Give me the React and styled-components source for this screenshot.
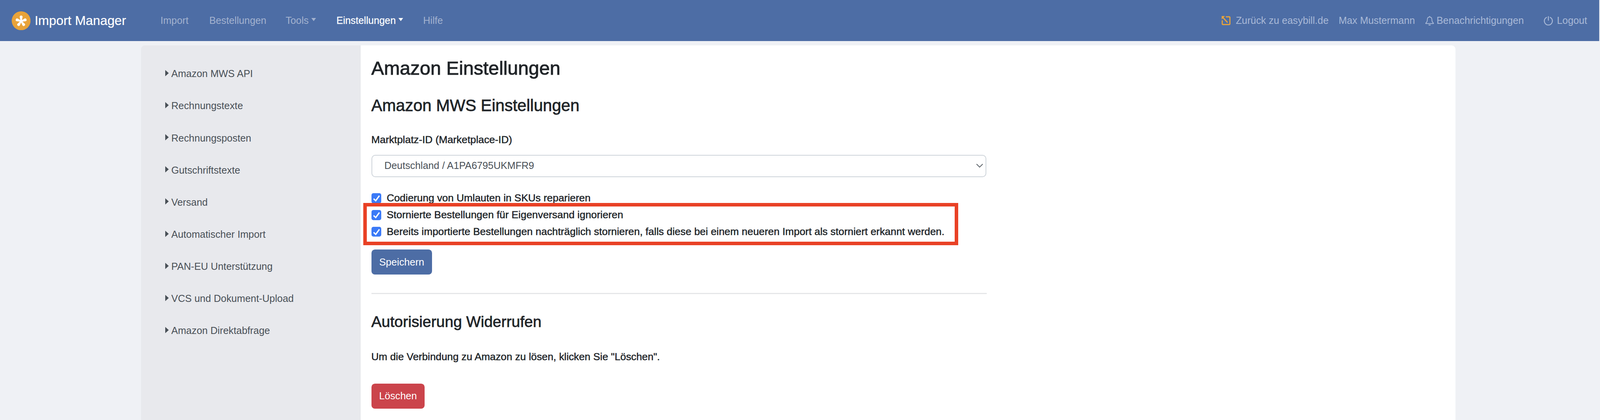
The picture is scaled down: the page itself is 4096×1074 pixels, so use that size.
import React from "react";
import styled, { createGlobalStyle } from "styled-components";

const Global = createGlobalStyle`
  html, body { margin: 0; padding: 0; background: #eff1f5; overflow: hidden; }
  body { font-family: "Liberation Sans", Arial, sans-serif; color: #212529; }
  #root { zoom: 0.985; width: 4156px; height: 1090px; overflow: hidden; }
  * { box-sizing: border-box; }
`;

const Page = styled.div`
  width: 4156px;
  height: 1090px;
  display: flex;
  flex-direction: column;
`;

const Navbar = styled.nav`
  height: 107px;
  background: #4d6da5;
  display: flex;
  align-items: center;
  padding: 0 31px 0 30px;
  flex: none;
`;

const Brand = styled.div`
  display: flex;
  align-items: center;
  gap: 11px;
  width: 387px;
  color: #fff;
  font-size: 33.7px;
  -webkit-text-stroke: 0.25px #fff;
`;

const NavItem = styled.span`
  display: inline-flex;
  align-items: center;
  font-size: 25.7px;
  line-height: 40px;
  white-space: nowrap;
  margin-left: ${(p) => p.$ml || 0}px;
  color: ${(p) => (p.$active ? "#ffffff" : p.$right ? "#a9b9d7" : "#a3b2cf")};
  ${(p) => p.$active && "-webkit-text-stroke: 0.3px #fff;"}
`;

const Caret = styled.i`
  display: inline-block;
  margin-left: 7px;
  margin-top: -5px;
  border-top: 9px solid currentColor;
  border-left: 6.5px solid transparent;
  border-right: 6.5px solid transparent;
`;

const RightNav = styled.div`
  margin-left: auto;
  display: flex;
  align-items: center;
`;

const IconSlot = styled.span`
  display: inline-flex;
  margin: 0 ${(p) => p.$mr}px 0 ${(p) => p.$ml || 0}px;
`;

const Container = styled.div`
  flex: 1;
  width: 3416px;
  margin: 11px 0 0 367px;
  display: flex;
  min-height: 0;
`;

const Sidebar = styled.aside`
  width: 570px;
  background: #e8e9ed;
  border-right: 1px solid #dfe1e5;
  border-top-left-radius: 10px;
  padding: 32px 0 0 62px;
  flex: none;
`;

const SideItem = styled.div`
  height: 83.4px;
  display: flex;
  align-items: center;
  font-size: 25.8px;
  color: #495057;
  white-space: nowrap;
`;

const SideArrow = styled.i`
  display: inline-block;
  margin-right: 7px;
  border-left: 10px solid #495057;
  border-top: 8.5px solid transparent;
  border-bottom: 8.5px solid transparent;
  margin-top: -4px;
`;

const Content = styled.main`
  flex: 1;
  background: #fff;
  border-top-right-radius: 10px;
  padding: 0 0 0 28px;
  min-width: 0;
`;

const Title = styled.h1`
  margin: 0;
  padding-top: 29px;
  font-size: 49.4px;
  line-height: 60px;
  font-weight: 400;
  -webkit-text-stroke: 1.1px #212529;
  color: #212529;
`;

const SubTitle = styled.h2`
  margin: ${(p) => p.$mt}px 0 0;
  font-size: ${(p) => p.$size}px;
  line-height: 50px;
  font-weight: 400;
  -webkit-text-stroke: 0.9px #212529;
  color: #212529;
`;

const Label = styled.div`
  margin-top: 44px;
  font-size: 26.8px;
  line-height: 40px;
  -webkit-text-stroke: 0.6px #212529;
`;

const SelectBox = styled.div`
  margin-top: 19px;
  width: 1598px;
  height: 58px;
  border: 2.5px solid #ced4da;
  border-radius: 10px;
  display: flex;
  align-items: center;
  justify-content: space-between;
  padding: 0 6px 2px 32px;
  font-size: 25.7px;
  color: #495057;
`;

const Checks = styled.div`
  position: relative;
  margin-top: 33px;
  width: 1598px;
`;

const CheckRow = styled.label`
  display: flex;
  align-items: center;
  height: 43.5px;
  gap: 14px;
  font-size: 26.8px;
  white-space: nowrap;
  -webkit-text-stroke: 0.6px #212529;
`;

const CheckBox = styled.span`
  width: 26px;
  height: 26px;
  border-radius: 5px;
  background: #3b7af7;
  display: inline-flex;
  flex: none;
`;

const Highlight = styled.div`
  position: absolute;
  left: -21px;
  top: 34px;
  width: 1546px;
  height: 110px;
  border: 10px solid #e94125;
  pointer-events: none;
`;

const Button = styled.div`
  width: ${(p) => p.$w}px;
  height: 65px;
  margin-top: ${(p) => p.$mt}px;
  border-radius: 9px;
  background: ${(p) => p.$bg};
  color: #fff;
  font-size: 26px;
  display: flex;
  align-items: center;
  justify-content: center;
`;

const Rule = styled.hr`
  margin: 48px 0 0;
  width: 1599px;
  height: 3px;
  border: 0;
  background: #e5e6e8;
`;

const Text = styled.p`
  margin: 47px 0 0;
  font-size: 26.7px;
  line-height: 40px;
  -webkit-text-stroke: 0.6px #212529;
`;

const Logo = () => (
  <svg width="49" height="49" viewBox="0 0 49 49">
    <circle cx="24.5" cy="24.5" r="24.5" fill="#e8a33a" />
    <g fill="#fff">
      {[0, 72, 144, 216, 288].map((a) => (
        <path key={a} d="M23 25.500L20.800 14.500a3.700 3.700 0 1 1 7.400 0L26 25.500z" transform={`rotate(${a} 24.5 25.5)`} />
      ))}
    </g>
  </svg>
);

const BackIcon = () => (
  <svg width="24" height="26" viewBox="0 0 24 26" fill="none" stroke="#e8a33a" strokeWidth="3" strokeLinecap="round" strokeLinejoin="round">
    <path d="M13.500 3H21a2 2 0 0 1 2 2v16a2 2 0 0 1-2 2H5a2 2 0 0 1-2-2v-7.500" />
    <path d="M4 4l12 13" />
    <path d="M1.500 1H10L1.500 10z" fill="#e8a33a" stroke="none" />
  </svg>
);

const Bell = () => (
  <svg width="24" height="26" viewBox="0 0 24 26" fill="none" stroke="#a9b9d7" strokeWidth="2" strokeLinejoin="round">
    <path d="M12 3.500c-4.500 0-6 3.500-6 7.500 0 5-2 7-4 8.500v1h20v-1c-2-1.500-4-3.500-4-8.500 0-4-1.500-7.500-6-7.500zM12 3.500V1" />
    <path d="M9 23h6a3 3 0 0 1-6 0z" fill="#a9b9d7" stroke="none" />
  </svg>
);

const Power = () => (
  <svg width="24" height="24" viewBox="0 0 24 24" fill="none" stroke="#a9b9d7" strokeWidth="2.400" strokeLinecap="round">
    <path d="M12 1.500V11M7.200 3.500a10.500 10.500 0 1 0 9.600 0" />
  </svg>
);

const Tick = () => (
  <svg width="26" height="26" viewBox="0 0 26 26" fill="none" stroke="#fff" strokeWidth="3.400">
    <path d="M5.500 14.500L11 19.500 20.500 6.500" />
  </svg>
);

const Chevron = () => (
  <svg width="18" height="11" viewBox="0 0 18 11" fill="none" stroke="#555c63" strokeWidth="2">
    <path d="M1 1.500L9 9.500l8-8" />
  </svg>
);

const sections = [
  "Amazon MWS API",
  "Rechnungstexte",
  "Rechnungsposten",
  "Gutschriftstexte",
  "Versand",
  "Automatischer Import",
  "PAN-EU Unterstützung",
  "VCS und Dokument-Upload",
  "Amazon Direktabfrage",
];

const options = [
  "Codierung von Umlauten in SKUs reparieren",
  "Stornierte Bestellungen für Eigenversand ignorieren",
  "Bereits importierte Bestellungen nachträglich stornieren, falls diese bei einem neueren Import als storniert erkannt werden.",
];

export default function App() {
  return (
    <Page>
      <Global />
      <Navbar>
        <Brand>
          <Logo />
          Import Manager
        </Brand>
        <NavItem>Import</NavItem>
        <NavItem $ml={54}>Bestellungen</NavItem>
        <NavItem $ml={50}>Tools<Caret /></NavItem>
        <NavItem $ml={53} $active>Einstellungen<Caret /></NavItem>
        <NavItem $ml={52}>Hilfe</NavItem>
        <RightNav>
          <IconSlot $mr={14}><BackIcon /></IconSlot>
          <NavItem $right>Zurück zu easybill.de</NavItem>
          <NavItem $right $ml={26}>Max Mustermann</NavItem>
          <IconSlot $ml={26} $mr={6}><Bell /></IconSlot>
          <NavItem $right>Benachrichtigungen</NavItem>
          <IconSlot $ml={52} $mr={10}><Power /></IconSlot>
          <NavItem $right>Logout</NavItem>
        </RightNav>
      </Navbar>
      <Container>
        <Sidebar>
          {sections.map((s) => (
            <SideItem key={s}><SideArrow />{s}</SideItem>
          ))}
        </Sidebar>
        <Content>
          <Title>Amazon Einstellungen</Title>
          <SubTitle $mt={42} $size={42.7}>Amazon MWS Einstellungen</SubTitle>
          <Label>Marktplatz-ID (Marketplace-ID)</Label>
          <SelectBox>
            Deutschland / A1PA6795UKMFR9
            <Chevron />
          </SelectBox>
          <Checks>
            {options.map((o) => (
              <CheckRow key={o}><CheckBox><Tick /></CheckBox>{o}</CheckRow>
            ))}
            <Highlight />
          </Checks>
          <Button $w={158} $mt={24.5} $bg="#4d6da5">Speichern</Button>
          <Rule />
          <SubTitle $mt={46} $size={40}>Autorisierung Widerrufen</SubTitle>
          <Text>Um die Verbindung zu Amazon zu lösen, klicken Sie "Löschen".</Text>
          <Button $w={139} $mt={49} $bg="#cb444b">Löschen</Button>
        </Content>
      </Container>
    </Page>
  );
}
